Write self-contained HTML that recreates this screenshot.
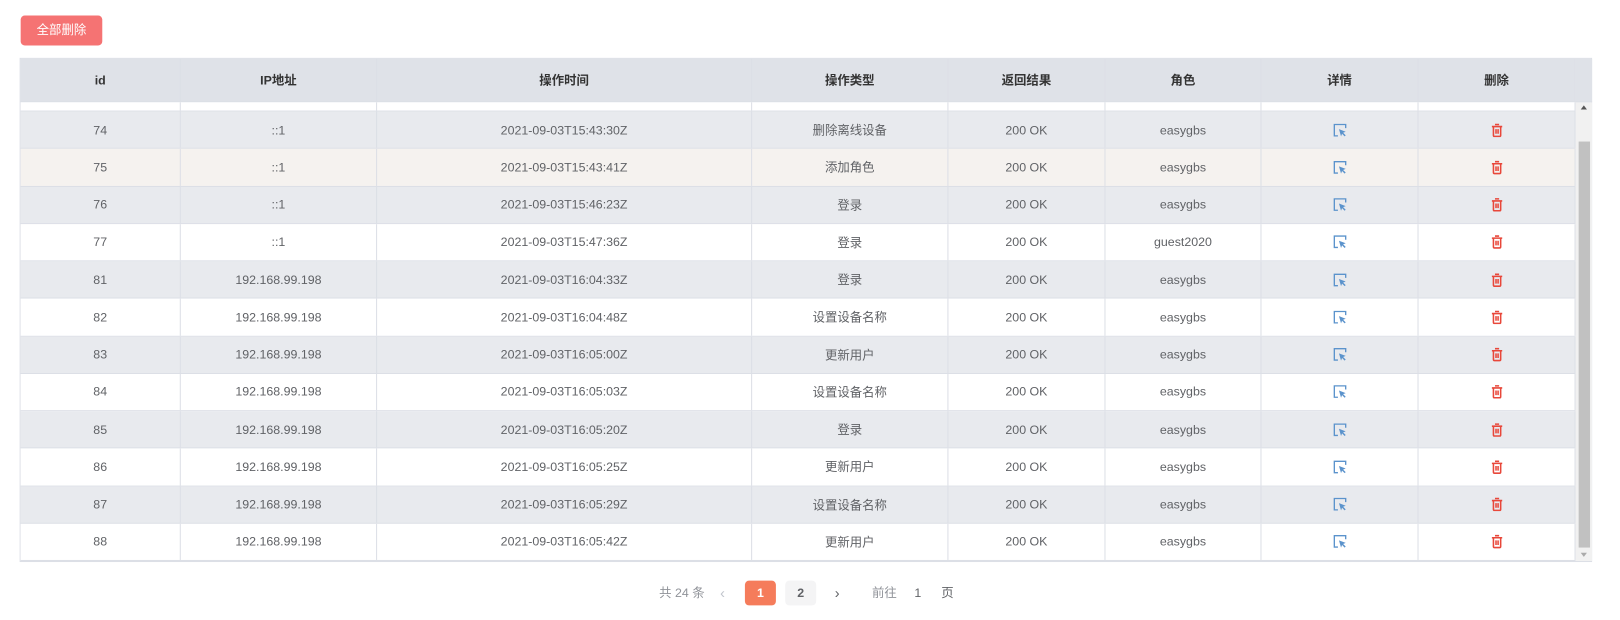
<!DOCTYPE html>
<html><head><meta charset="utf-8"><style>
body{margin:0;width:1620px;height:619px;background:#fff;font-family:"Liberation Sans","Noto Sans CJK SC",sans-serif;font-size:12px;color:#606266;overflow:hidden}
#s{position:absolute;left:0;top:0;width:1568px;height:600px;transform:scale(1.03316);transform-origin:0 0}
.btn{position:absolute;left:20px;top:15px;width:79px;height:29px;background:#f56c6c;border-radius:4px;color:#fff;font-size:12px;line-height:29px;text-align:center;opacity:.95}
.row{position:absolute;left:20px;width:1505px;display:flex;border-bottom:1px solid #dcdfe6;box-sizing:border-box}
.row div{border-right:1px solid #dcdfe6;box-sizing:border-box;display:flex;align-items:center;justify-content:center;white-space:nowrap;height:100%}
.hd{background:#dfe2e8;color:#333;font-weight:bold}
.g{background:#e8eaee}.h{background:#f5f2ef}.w{background:#fff}
.sb{position:absolute;left:1525px;top:99px;width:16px;height:444px;background:#f1f1f1}
.th{position:absolute;left:1528px;top:137px;width:11px;height:393px;background:#c1c1c1}
.pg{position:absolute;top:562px;height:24px;line-height:24px;font-size:12px;color:#606266}
</style></head><body><div id="s">
<div class="btn">全部删除</div>
<div style="position:absolute;left:19px;top:56px;width:1522px;height:488px;border:1px solid #dcdfe6;box-sizing:border-box"></div>
<div id="t"></div>
<div class="sb"></div><div class="th"></div>
<div style="position:absolute;left:1525px;top:57px;width:16px;height:42px;background:#dfe2e8;border-bottom:1px solid #dcdfe6;box-sizing:border-box"></div>
<div style="position:absolute;left:1530px;top:102px;width:0;height:0;border-left:3px solid transparent;border-right:3px solid transparent;border-bottom:4px solid #555"></div>
<div style="position:absolute;left:1530px;top:535px;width:0;height:0;border-left:3px solid transparent;border-right:3px solid transparent;border-top:4px solid #aaa"></div>
<div class="pg" style="left:638px;color:#909399">共 24 条</div>
<div class="pg" style="left:697px;color:#c0c4cc;font-size:14px">‹</div>
<div style="position:absolute;left:721px;top:562px;width:30px;height:24px;background:#f57c5b;border-radius:4px;color:#fff;font-weight:bold;text-align:center;line-height:24px">1</div>
<div style="position:absolute;left:760px;top:562px;width:30px;height:24px;background:#f4f4f5;border-radius:4px;color:#606266;font-weight:bold;text-align:center;line-height:24px">2</div>
<div class="pg" style="left:808px;font-size:14px">›</div>
<div class="pg" style="left:844px;color:#909399">前往</div>
<div class="pg" style="left:885px">1</div>
<div class="pg" style="left:911px">页</div>
</div>
<script>
var W=[155,190,363,190,152,151,152,152];
var d=[[74,'::1','2021-09-03T15:43:30Z','删除离线设备','easygbs','g'],[75,'::1','2021-09-03T15:43:41Z','添加角色','easygbs','h'],[76,'::1','2021-09-03T15:46:23Z','登录','easygbs','g'],[77,'::1','2021-09-03T15:47:36Z','登录','guest2020','w'],[81,'192.168.99.198','2021-09-03T16:04:33Z','登录','easygbs','g'],[82,'192.168.99.198','2021-09-03T16:04:48Z','设置设备名称','easygbs','w'],[83,'192.168.99.198','2021-09-03T16:05:00Z','更新用户','easygbs','g'],[84,'192.168.99.198','2021-09-03T16:05:03Z','设置设备名称','easygbs','w'],[85,'192.168.99.198','2021-09-03T16:05:20Z','登录','easygbs','g'],[86,'192.168.99.198','2021-09-03T16:05:25Z','更新用户','easygbs','w'],[87,'192.168.99.198','2021-09-03T16:05:29Z','设置设备名称','easygbs','g'],[88,'192.168.99.198','2021-09-03T16:05:42Z','更新用户','easygbs','w']];
var ed='<svg width="14" height="14" viewBox="0 0 14 14"><path d="M5 12.5H1.5V1.5H12.5V5" fill="none" stroke="#5b93cc" stroke-width="1.3"/><path d="M6 6L12.5 8.5L10 9.5L12.5 12L11.5 13L9 10.5L8 13Z" fill="#5b93cc"/></svg>';
var tr='<svg width="12" height="14" viewBox="0 0 12 14"><path d="M4 1.5h4M1 3.5h10M2.5 3.5v8.5a1 1 0 0 0 1 1h5a1 1 0 0 0 1-1V3.5M5 6v4.5M7 6v4.5" fill="none" stroke="#e8473a" stroke-width="1.5"/></svg>';
function row(cells,top,h,cls){var s='<div class="row '+cls+'" style="top:'+top+'px;height:'+h+'px">';cells.forEach(function(c,i){s+='<div style="width:'+W[i]+'px">'+c+'</div>';});return s+'</div>';}
var h=row(['id','IP地址','操作时间','操作类型','返回结果','角色','详情','删除'],57,42,'hd');
h+=row(['','','','','','','',''],99,9,'w');
d.forEach(function(r,i){var t=108+i*36.25;h+=row([r[0],r[1],r[2],r[3],'200 OK',r[4],ed,tr],t,36.25,r[5]);});
document.getElementById('t').innerHTML=h;
</script>
</body></html>
